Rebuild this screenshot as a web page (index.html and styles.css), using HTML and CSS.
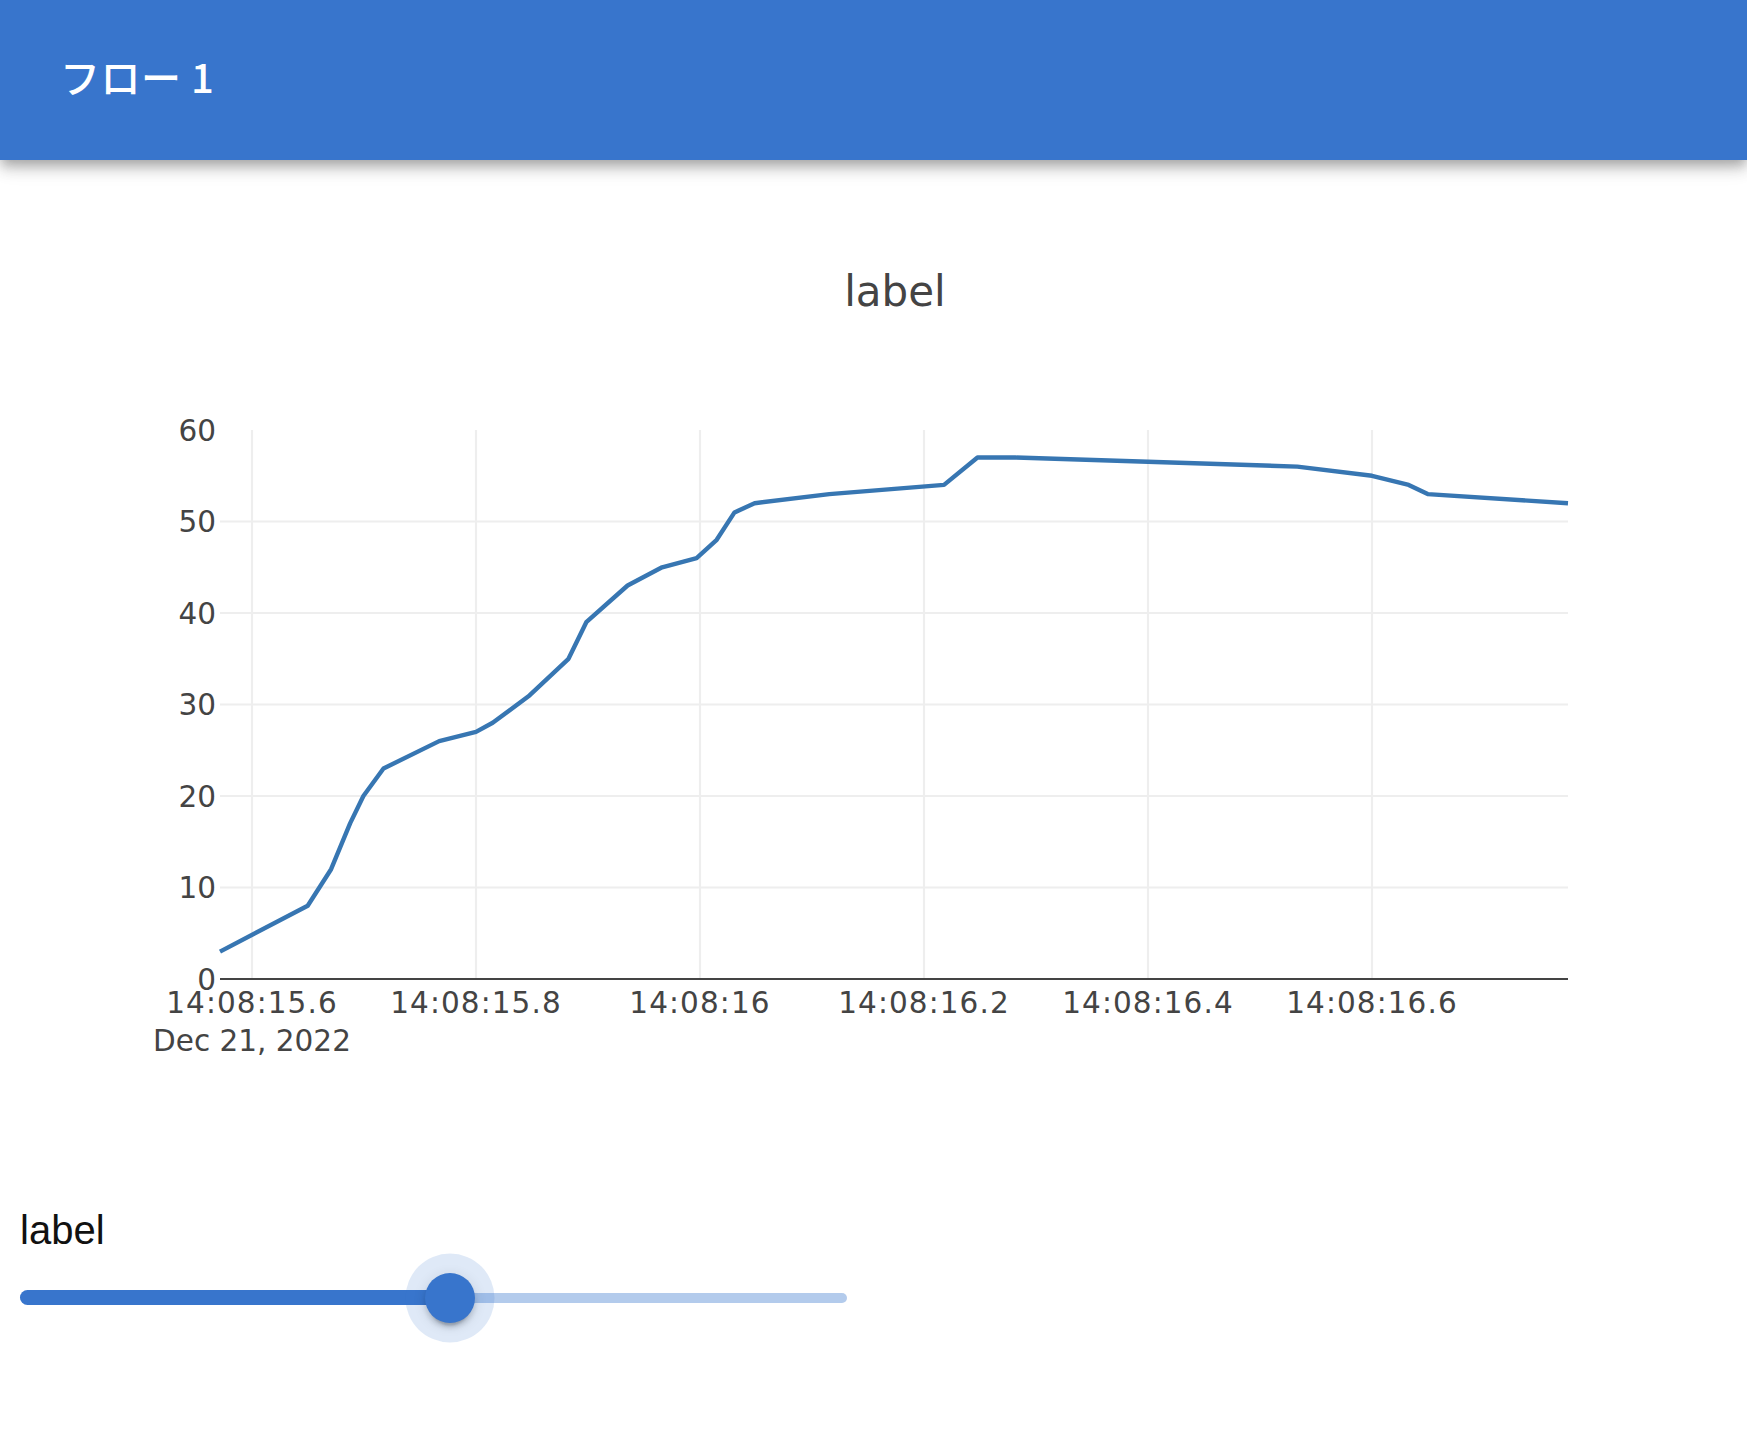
FILE: index.html
```html
<!DOCTYPE html>
<html lang="ja">
<head>
<meta charset="utf-8">
<title>フロー 1</title>
<link rel="stylesheet" href="styles.css">
</head>
<body>
<header class="appbar">
  <h1 class="appbar-title">フロー 1</h1>
</header>
<main class="content">
  <section class="chart">
    <svg class="chart-svg" width="1700" height="945" viewBox="0 0 1700 945" xmlns="http://www.w3.org/2000/svg">
      <g class="grid">
        <line x1="208" y1="220" x2="208" y2="769"/>
        <line x1="432" y1="220" x2="432" y2="769"/>
        <line x1="656" y1="220" x2="656" y2="769"/>
        <line x1="880" y1="220" x2="880" y2="769"/>
        <line x1="1104" y1="220" x2="1104" y2="769"/>
        <line x1="1328" y1="220" x2="1328" y2="769"/>
        <line x1="176" y1="677.5" x2="1524" y2="677.5"/>
        <line x1="176" y1="586" x2="1524" y2="586"/>
        <line x1="176" y1="494.5" x2="1524" y2="494.5"/>
        <line x1="176" y1="403" x2="1524" y2="403"/>
        <line x1="176" y1="311.5" x2="1524" y2="311.5"/>
      </g>
      <polyline class="series" points="176,741.6 263.7,695.8 287.1,659.2 306.1,613.4 319.4,586 339.5,558.5 395.2,531.1 432,521.9 448.7,512.8 485.5,485.4 524.5,448.8 542.3,412.2 583.6,375.5 618.1,357.3 652.6,348.1 672.7,329.8 690.5,302.4 710.6,293.2 785.3,284.1 900,274.9 933.5,247.5 971.4,247.5 1253.3,256.6 1328,265.8 1364.7,274.9 1383.7,284.1 1524,293.2"/>
      <line class="axis-line" x1="176" y1="769" x2="1524" y2="769"/>
      <g class="ytick">
        <text x="172" y="780">0</text>
        <text x="172" y="688">10</text>
        <text x="172" y="596.5">20</text>
        <text x="172" y="505">30</text>
        <text x="172" y="413.5">40</text>
        <text x="172" y="322">50</text>
        <text x="172" y="230.5">60</text>
      </g>
      <g class="xtick">
        <text class="xtick-time" x="208" y="803">14:08:15.6</text>
        <text class="xtick-date" x="208" y="841">Dec 21, 2022</text>
        <text class="xtick-time" x="432" y="803">14:08:15.8</text>
        <text class="xtick-time" x="656" y="803">14:08:16</text>
        <text class="xtick-time" x="880" y="803">14:08:16.2</text>
        <text class="xtick-time" x="1104" y="803">14:08:16.4</text>
        <text class="xtick-time" x="1328" y="803">14:08:16.6</text>
      </g>
      <text class="chart-title" x="851" y="96">label</text>
    </svg>
  </section>
  <section class="slider-block">
    <div class="slider-label">label</div>
    <div class="slider">
      <span class="slider-rail"></span>
      <span class="slider-track" style="width: 52%"></span>
      <span class="slider-thumb" style="left: 52%"></span>
    </div>
  </section>
</main>
</body>
</html>
```

FILE: styles.css
```css
html, body {
  margin: 0;
  padding: 0;
  background: #fff;
}

body {
  font-family: "Liberation Sans", Arial, sans-serif;
}

.appbar {
  position: relative;
  z-index: 2;
  height: 160px;
  box-sizing: border-box;
  padding: 0 60px 8px;
  display: flex;
  align-items: center;
  background: #3875cc;
  color: #fff;
  box-shadow: 0 5px 10px -2.5px rgba(0,0,0,0.2),
              0 10px 12.5px 0 rgba(0,0,0,0.14),
              0 2.5px 25px 0 rgba(0,0,0,0.12);
}

.appbar-title {
  margin: 0;
  font-family: "Noto Sans CJK JP", "Noto Sans", sans-serif;
  font-size: 40px;
  font-weight: 500;
  line-height: 1.6;
  letter-spacing: 0.5px;
}

.content {
  padding: 0 20px 120px;
}

.chart {
  margin-top: 50px;
  margin-left: 24px;
  height: 945px;
}

.chart-svg {
  display: block;
}

.grid line {
  stroke: #eeeeee;
  stroke-width: 2.2;
}

.axis-line {
  stroke: #444;
  stroke-width: 2.2;
}

.series {
  fill: none;
  stroke: #3776b2;
  stroke-width: 4.4;
  stroke-linejoin: round;
}

.ytick text,
.xtick text {
  font-family: "DejaVu Sans", Verdana, sans-serif;
  font-size: 29.5px;
  fill: #444;
}

.ytick text {
  text-anchor: end;
}

.xtick text {
  text-anchor: middle;
}

.xtick-time {
  letter-spacing: 1.1px;
}

.chart-title {
  font-family: "DejaVu Sans", Verdana, sans-serif;
  font-size: 42px;
  fill: #444;
  text-anchor: middle;
}

.slider-block {
  margin-top: 45px;
}

.slider-label {
  font-family: "Liberation Sans", Arial, sans-serif;
  font-size: 40px;
  line-height: 60px;
  color: #111;
}

.slider {
  position: relative;
  width: 827px;
  height: 75px;
}

.slider-rail {
  position: absolute;
  left: 0;
  right: 0;
  top: 32.5px;
  height: 10px;
  border-radius: 5px;
  background: #3875cc;
  opacity: 0.38;
}

.slider-track {
  position: absolute;
  left: 0;
  top: 30px;
  height: 15px;
  border-radius: 7.5px;
  background: #3875cc;
}

.slider-thumb {
  position: absolute;
  top: 37.5px;
  width: 50px;
  height: 50px;
  margin: -25px 0 0 -25px;
  border-radius: 50%;
  background: #3875cc;
  box-shadow: 0 0 0 19.5px rgba(56,117,204,0.16),
              0 7.5px 2.5px -5px rgba(0,0,0,0.2),
              0 5px 5px 0 rgba(0,0,0,0.14),
              0 2.5px 12.5px 0 rgba(0,0,0,0.12);
}
```
